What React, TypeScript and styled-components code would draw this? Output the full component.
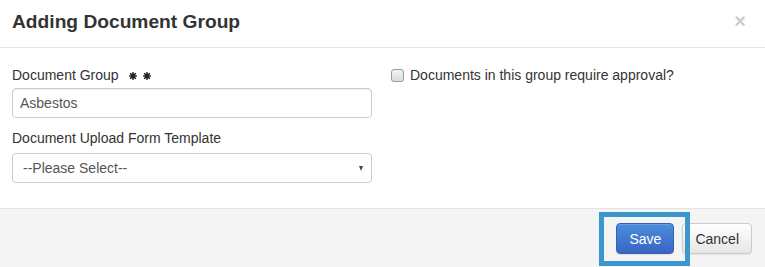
import React from "react";
import styled, { createGlobalStyle } from "styled-components";

const Global = createGlobalStyle`
  html, body { margin: 0; padding: 0; background: #fff; }
  body { font-family: "Liberation Sans", Arial, sans-serif; font-size: 14px; color: #333; }
  * { box-sizing: border-box; }
`;

const Modal = styled.div`
  width: 765px;
  height: 267px;
  background: #fff;
  display: flex;
  flex-direction: column;
  overflow: hidden;
`;

const Header = styled.div`
  display: flex;
  align-items: flex-start;
  justify-content: space-between;
  padding: 9px 19px 12px 12px;
  border-bottom: 1px solid #e5e5e5;
`;

const Title = styled.h4`
  margin: 0;
  font-size: 19.2px;
  font-weight: bold;
  line-height: 26px;
  color: #333;
`;

const Close = styled.button`
  border: 0;
  background: transparent;
  padding: 0;
  margin-top: 2px;
  font-family: "Liberation Sans", Arial, sans-serif;
  font-size: 20px;
  font-weight: bold;
  line-height: 21px;
  color: #000;
  opacity: 0.2;
  cursor: pointer;
`;

const Body = styled.div`
  display: grid;
  grid-template-columns: 360px 1fr;
  column-gap: 19px;
  padding: 17px 12px 25px 12px;
  border-bottom: 1px solid #e5e5e5;
`;

const Column = styled.div`
  display: flex;
  flex-direction: column;
`;

const Label = styled.label<{ $gap: number }>`
  display: flex;
  align-items: center;
  gap: 10px;
  font-size: 14px;
  line-height: 20px;
  color: #333;
  margin-bottom: ${(p) => p.$gap}px;
`;

const Stars = styled.span`
  display: inline-flex;
  gap: 6px;
  margin-top: 2px;
`;

const TextInput = styled.input`
  width: 100%;
  height: 30px;
  padding: 0 7px;
  border: 1px solid #ccc;
  border-radius: 4px;
  font-family: "Liberation Sans", Arial, sans-serif;
  font-size: 14px;
  color: #555;
  background: #fff;
  box-shadow: inset 0 1px 1px rgba(0, 0, 0, 0.075);
  margin-bottom: 10px;
  outline: none;
`;

const SelectBox = styled.div`
  width: 100%;
  height: 30px;
  border: 1px solid #ccc;
  border-radius: 4px;
  display: flex;
  align-items: center;
  justify-content: space-between;
  padding: 0 8px 0 10px;
  font-size: 14px;
  color: #555;
  background: #fff;
`;

const Caret = styled.span`
  width: 0;
  height: 0;
  border-left: 2.5px solid transparent;
  border-right: 2.5px solid transparent;
  border-top: 5px solid #444;
  margin-top: 1px;
`;

const CheckRow = styled.label`
  display: flex;
  align-items: center;
  gap: 6px;
  font-size: 14px;
  line-height: 20px;
  color: #333;
`;

const Check = styled.input`
  appearance: none;
  -webkit-appearance: none;
  width: 13px;
  height: 13px;
  margin: 0;
  border: 1px solid #9a9a9a;
  border-radius: 3px;
  background: linear-gradient(#f2f2f2, #dcdcdc);
`;

const Footer = styled.div`
  flex: 1;
  background: #f4f4f4;
  display: flex;
  justify-content: flex-end;
  align-items: flex-start;
  gap: 8px;
  padding: 14px 13px 0 0;
`;

const Highlight = styled.span`
  position: relative;
  display: inline-flex;
  &::after {
    content: "";
    position: absolute;
    top: -11px;
    left: -17px;
    right: -16px;
    bottom: -12px;
    border: 5px solid #3c97cc;
    pointer-events: none;
    z-index: 2;
  }
`;

const Button = styled.button<{ $primary?: boolean }>`
  height: 31px;
  padding: 0 12px;
  border-radius: 4px;
  font-family: "Liberation Sans", Arial, sans-serif;
  font-size: 14px;
  line-height: 20px;
  cursor: pointer;
  border: 1px solid ${(p) => (p.$primary ? "#3460b8" : "#ccc")};
  color: ${(p) => (p.$primary ? "#fff" : "#333")};
  background: ${(p) =>
    p.$primary
      ? "linear-gradient(#4b8ddb, #3a65c3)"
      : "linear-gradient(#ffffff, #e6e6e6)"};
  box-shadow: inset 0 1px 0 rgba(255, 255, 255, 0.15), 0 1px 1px rgba(0, 0, 0, 0.075);
`;

const Asterisk = () => (
  <svg width="8" height="8" viewBox="0 0 9 9" aria-hidden="true">
    <g fill="#222">
      <rect x="3.6" y="0" width="1.8" height="9" rx="0.5" />
      <rect x="3.6" y="0" width="1.8" height="9" rx="0.5" transform="rotate(45 4.5 4.5)" />
      <rect x="3.6" y="0" width="1.8" height="9" rx="0.5" transform="rotate(90 4.5 4.5)" />
      <rect x="3.6" y="0" width="1.8" height="9" rx="0.5" transform="rotate(-45 4.5 4.5)" />
      <circle cx="4.5" cy="4.5" r="2" />
    </g>
  </svg>
);

export default function App() {
  return (
    <>
      <Global />
      <Modal>
        <Header>
          <Title>Adding Document Group</Title>
          <Close aria-label="Close">×</Close>
        </Header>
        <Body>
          <Column>
            <Label $gap={3}>
              Document Group
              <Stars>
                <Asterisk />
                <Asterisk />
              </Stars>
            </Label>
            <TextInput defaultValue="Asbestos" />
            <Label $gap={5}>Document Upload Form Template</Label>
            <SelectBox>
              <span>--Please Select--</span>
              <Caret />
            </SelectBox>
          </Column>
          <Column>
            <CheckRow>
              <Check type="checkbox" />
              Documents in this group require approval?
            </CheckRow>
          </Column>
        </Body>
        <Footer>
          <Highlight>
            <Button $primary>Save</Button>
          </Highlight>
          <Button>Cancel</Button>
        </Footer>
      </Modal>
    </>
  );
}
